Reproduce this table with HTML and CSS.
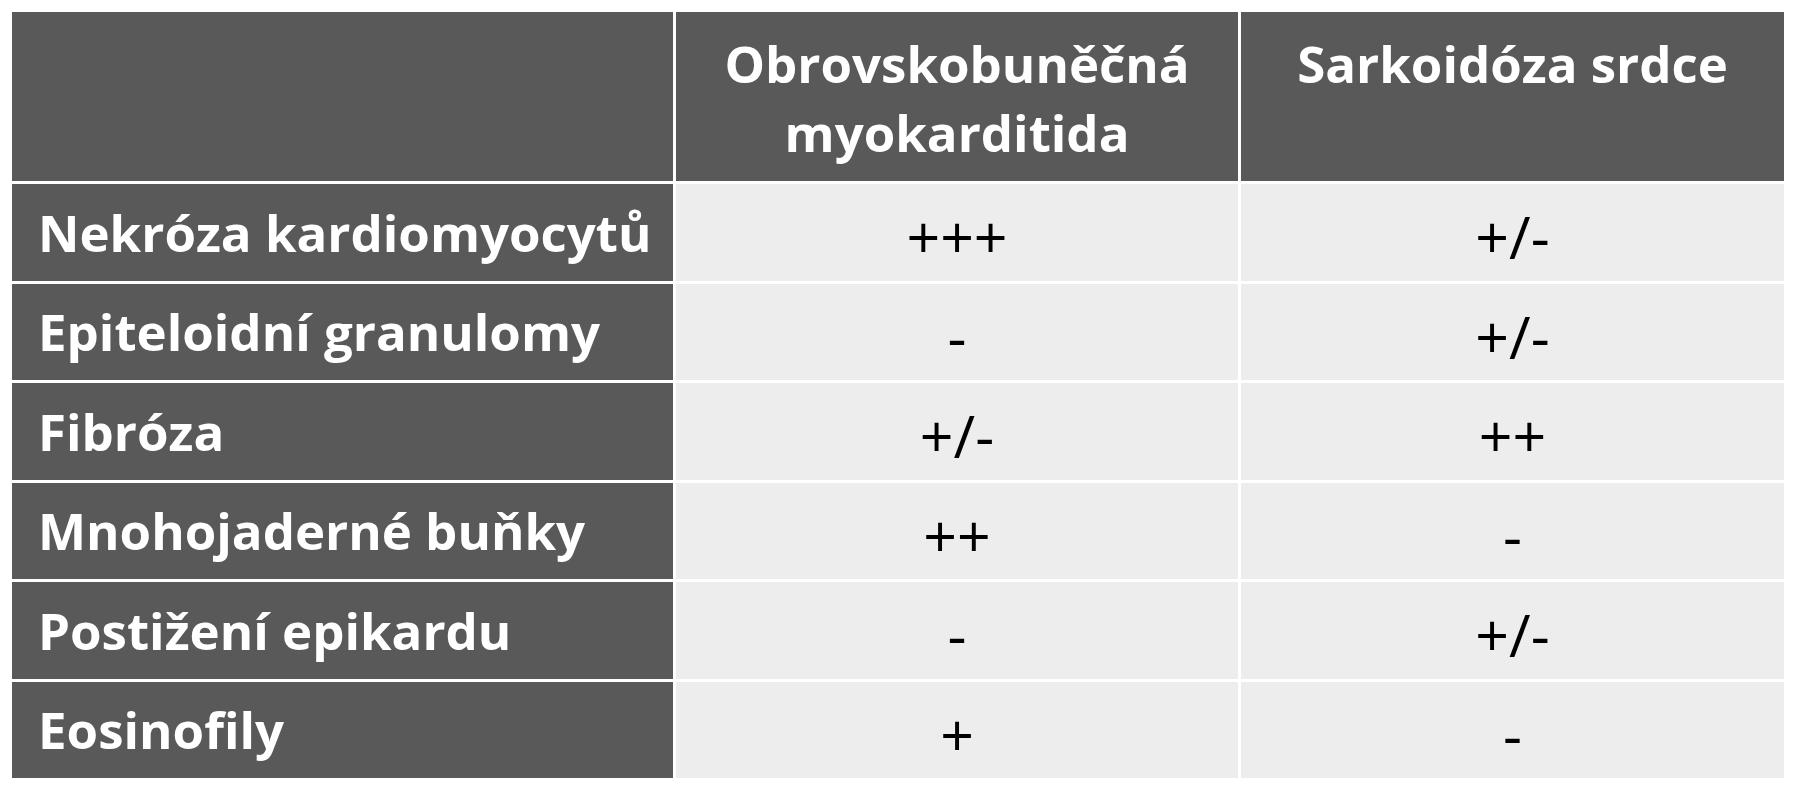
FILE: index.html
```html
<!DOCTYPE html>
<html lang="cs">
<head>
<meta charset="utf-8">
<title>Obrovskobuněčná myokarditida vs. sarkoidóza srdce</title>
<link rel="stylesheet" href="styles.css">
</head>
<body>
<table class="cmp">
  <colgroup>
    <col class="c-label">
    <col class="c-a">
    <col class="c-b">
  </colgroup>
  <thead>
    <tr class="head">
      <th class="corner"></th>
      <th class="colhead">Obrovskobuněčná<br>myokarditida</th>
      <th class="colhead">Sarkoidóza srdce</th>
    </tr>
  </thead>
  <tbody>
    <tr class="row"><th class="label">Nekróza kardiomyocytů</th><td class="val">+++</td><td class="val">+/-</td></tr>
    <tr class="row"><th class="label">Epiteloidní granulomy</th><td class="val">-</td><td class="val">+/-</td></tr>
    <tr class="row"><th class="label">Fibróza</th><td class="val">+/-</td><td class="val">++</td></tr>
    <tr class="row"><th class="label">Mnohojaderné buňky</th><td class="val">++</td><td class="val">-</td></tr>
    <tr class="row"><th class="label">Postižení epikardu</th><td class="val">-</td><td class="val">+/-</td></tr>
    <tr class="row"><th class="label">Eosinofily</th><td class="val">+</td><td class="val">-</td></tr>
  </tbody>
</table>
</body>
</html>
```
FILE: styles.css
```css
html, body {
  margin: 0;
  padding: 0;
  background: #ffffff;
}

.cmp {
  margin: 9px 0 0 9px;
  border-collapse: separate;
  border-spacing: 3px;
  table-layout: fixed;
  width: 1777px;
  font-family: "Open Sans", "Noto Sans", sans-serif;
}

.c-label { width: 661px; }
.c-a { width: 562px; }
.c-b { width: 543px; }

.head th {
  height: 169px;
  box-sizing: border-box;
  padding: 17px 0 0;
  vertical-align: top;
  background: #595959;
  color: #ffffff;
  font-weight: 700;
  font-size: 51px;
  line-height: 69px;
  text-align: center;
}

.row th,
.row td {
  height: 96.5px;
  box-sizing: border-box;
  vertical-align: middle;
  line-height: 60px;
}

.label {
  background: #595959;
  color: #ffffff;
  font-weight: 700;
  font-size: 51px;
  text-align: left;
  padding: 0 0 1px 26px;
  white-space: nowrap;
}

.val {
  background: #ededed;
  color: #000000;
  font-weight: 400;
  font-size: 59px;
  text-align: center;
  padding: 8px 0 0;
}
```
